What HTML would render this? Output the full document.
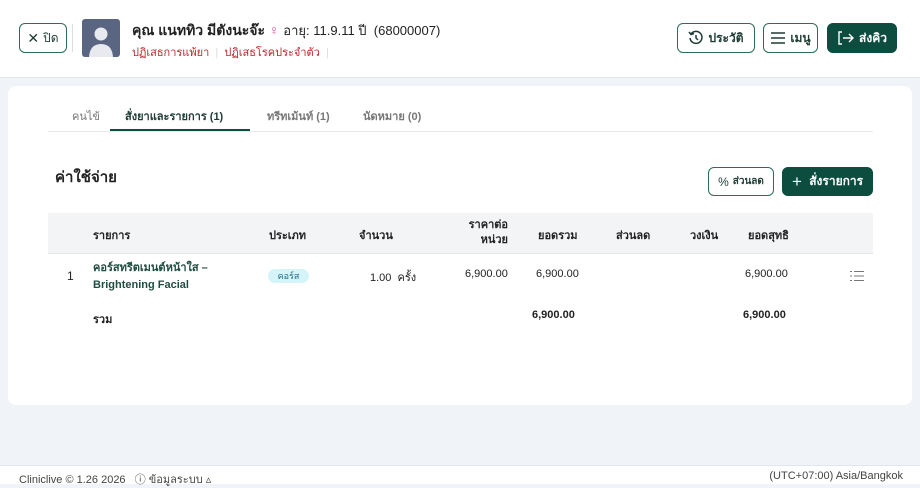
<!DOCTYPE html>
<html><head><meta charset="utf-8"><style>
*{box-sizing:border-box;margin:0;padding:0}
body{width:920px;height:484px;background:#f0f3f7;font-family:"Liberation Sans","Noto Sans CJK SC",sans-serif;color:#222;position:relative;overflow:hidden;font-size:12px}
.hdr{position:absolute;left:0;top:0;width:920px;height:78px;background:#fff;border-bottom:1px solid #e3e6ea}
.btn{position:absolute;border:1px solid #2f6b5c;border-radius:6px;background:#fff;color:#1f3b35;font-size:12px;display:flex;align-items:center;justify-content:center;gap:4px;font-weight:bold}
.dark{background:#0c4d3f;color:#fff;border-color:#0c4d3f}
.abs{position:absolute;white-space:nowrap}
.card{position:absolute;left:8px;top:86px;width:904px;height:319px;background:#fff;border-radius:8px}
.th{position:absolute;font-weight:bold;font-size:11px;color:#222}
.foot{position:absolute;left:0;top:465px;width:920px;height:19px;background:#fff;border-top:1px solid #e3e6ea;font-size:11px;color:#444}
</style></head><body>
<div class="hdr">
 <div class="btn" style="left:19px;top:23px;width:48px;height:30px;font-weight:normal"><span style="font-size:14px">✕</span>ปิด</div>
 <div class="abs" style="left:72px;top:24px;width:1px;height:28px;background:#ddd"></div>
 <div class="abs" style="left:82px;top:19px;width:38px;height:38px;background:#5a6582;border-radius:3px;overflow:hidden">
  <svg width="38" height="38"><circle cx="19" cy="15" r="6.5" fill="#e8eaf0"/><path d="M7 38 Q8 25 19 25 Q30 25 31 38Z" fill="#e8eaf0"/></svg></div>
 <div class="abs" style="left:132px;top:20px;font-size:14px;font-weight:bold">คุณ แนททิว มีตังนะจ๊ะ <span style="color:#e0559a;font-weight:normal">♀</span> <span style="font-weight:normal;font-size:13px">อายุ: 11.9.11 ปี &nbsp;(68000007)</span></div>
 <div class="abs" style="left:132px;top:43px;font-size:11px;color:#c0262d">ปฏิเสธการแพ้ยา <span style="color:#ddd">&nbsp;|&nbsp;</span> ปฏิเสธโรคประจำตัว <span style="color:#ddd">&nbsp;|</span></div>
 <div class="btn" style="left:677px;top:23px;width:78px;height:30px"><svg width="16" height="16" viewBox="0 0 16 16" fill="none" stroke="#1f3b35" stroke-width="1.5"><path d="M3 4 A6 6 0 1 1 2 8"/><path d="M1 2 L3 4.5 L6 3.5"/><path d="M8 5 V8 L10 10"/></svg>ประวัติ</div>
 <div class="btn" style="left:763px;top:23px;width:55px;height:30px"><svg width="16" height="14" stroke="#1f3b35" stroke-width="1.5"><path d="M1 2H15M1 7H15M1 12H15"/></svg>เมนู</div>
 <div class="btn dark" style="left:827px;top:23px;width:70px;height:30px"><svg width="18" height="16" fill="none" stroke="#fff" stroke-width="1.4"><path d="M5 2H2V14H5"/><path d="M6 8H16M12 4L16 8L12 12"/></svg>ส่งคิว</div>
</div>
<div class="card">
 <div class="abs" style="left:64px;top:21px;font-size:11px;color:#777">คนไข้</div>
 <div class="abs" style="left:117px;top:21px;font-size:11px;font-weight:bold;color:#1f3b35">สั่งยาและรายการ (1)</div>
 <div class="abs" style="left:259px;top:21px;font-size:11px;color:#777;font-weight:bold">ทรีทเม้นท์ (1)</div>
 <div class="abs" style="left:355px;top:21px;font-size:11px;color:#777;font-weight:bold">นัดหมาย (0)</div>
 <div class="abs" style="left:40px;top:45px;width:825px;height:1px;background:#e5e7eb"></div>
 <div class="abs" style="left:102px;top:43px;width:140px;height:2px;background:#0c4d3f"></div>
 <div class="abs" style="left:47px;top:79px;font-size:15px;font-weight:bold">ค่าใช้จ่าย</div>
 <div class="btn" style="left:700px;top:81px;width:66px;height:29px;font-size:10px"><span style="font-size:12px;font-weight:normal">%</span>ส่วนลด</div>
 <div class="btn dark" style="left:774px;top:81px;width:91px;height:29px"><span style="font-size:17px;font-weight:normal">+</span>&nbsp;สั่งรายการ</div>
 <div class="abs" style="left:40px;top:127px;width:825px;height:41px;background:#f3f4f6;border-bottom:1px solid #e5e7eb"></div>
 <div class="th" style="left:85px;top:140px">รายการ</div>
 <div class="th" style="left:261px;top:140px">ประเภท</div>
 <div class="th" style="left:351px;top:140px">จำนวน</div>
 <div class="th" style="left:455px;top:132px;text-align:right;width:45px;line-height:15px">ราคาต่อ<br>หน่วย</div>
 <div class="th" style="left:530px;top:140px">ยอดรวม</div>
 <div class="th" style="left:608px;top:140px">ส่วนลด</div>
 <div class="th" style="left:682px;top:140px">วงเงิน</div>
 <div class="th" style="left:740px;top:140px">ยอดสุทธิ</div>
 <div class="abs" style="left:59px;top:183px">1</div>
 <div class="abs" style="left:85px;top:174px;font-size:11px;font-weight:bold;color:#1f4d42;line-height:17px">คอร์สทรีตเมนต์หน้าใส –<br>Brightening Facial</div>
 <div class="abs" style="left:260px;top:183px;width:41px;height:14px;border-radius:7px;background:#d4f4fa;font-size:9px;color:#1f6a80;text-align:center;line-height:14px">คอร์ส</div>
 <div class="abs" style="left:362px;top:182px;font-size:11px">1.00 &nbsp;ครั้ง</div>
 <div class="abs" style="left:457px;top:182px;font-size:11px">6,900.00</div>
 <div class="abs" style="left:528px;top:182px;font-size:11px">6,900.00</div>
 <div class="abs" style="left:737px;top:182px;font-size:11px">6,900.00</div>
 <svg class="abs" style="left:842px;top:184px" width="14" height="12" stroke="#777" stroke-width="1"><path d="M0 1.5H2M4 1.5H14M0 6H2M4 6H14M0 10.5H2M4 10.5H14"/></svg>
 <div class="abs" style="left:85px;top:224px;font-size:11px;font-weight:bold">รวม</div>
 <div class="abs" style="left:524px;top:223px;font-size:11px;font-weight:bold">6,900.00</div>
 <div class="abs" style="left:735px;top:223px;font-size:11px;font-weight:bold">6,900.00</div>
</div>
<div class="foot">
 <div class="abs" style="left:19px;top:4px">Cliniclive © 1.26 2026 &nbsp;&nbsp;ⓘ ข้อมูลระบบ ▵</div>
 <div class="abs" style="right:17px;top:4px">(UTC+07:00) Asia/Bangkok</div>
</div>
</body></html>
